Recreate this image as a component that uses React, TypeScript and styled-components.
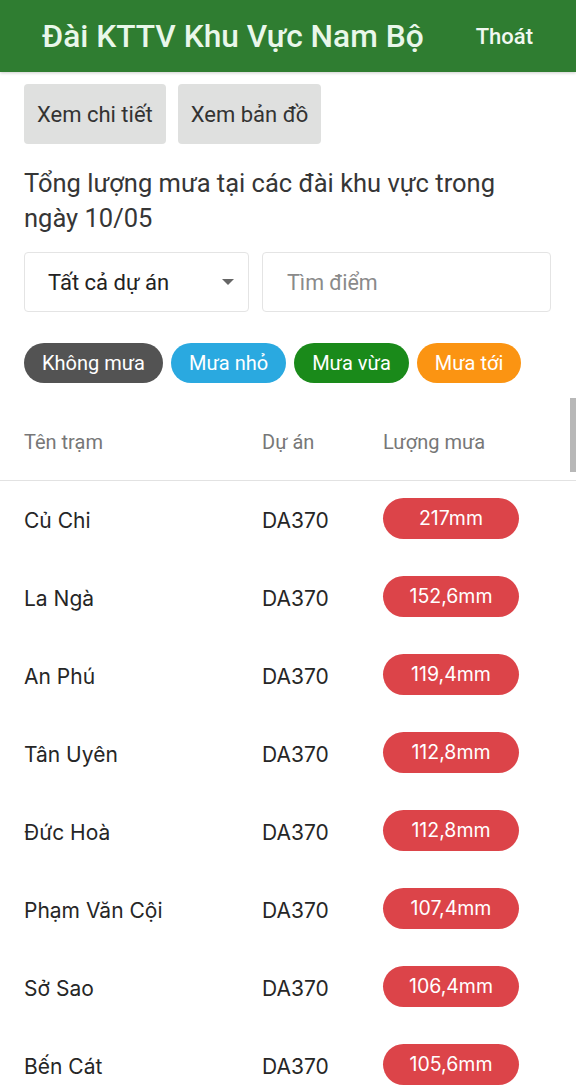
import React from 'react';
import styled, { createGlobalStyle } from 'styled-components';

const GlobalStyle = createGlobalStyle`
  html, body {
    margin: 0;
    padding: 0;
    background: #ffffff;
    font-family: Roboto, "Noto Sans", "Liberation Sans", sans-serif;
  }
  * { box-sizing: border-box; }
`;

type Station = { name: string; project: string; rain: string };

const stations: Station[] = [
  { name: 'Củ Chi', project: 'DA370', rain: '217mm' },
  { name: 'La Ngà', project: 'DA370', rain: '152,6mm' },
  { name: 'An Phú', project: 'DA370', rain: '119,4mm' },
  { name: 'Tân Uyên', project: 'DA370', rain: '112,8mm' },
  { name: 'Đức Hoà', project: 'DA370', rain: '112,8mm' },
  { name: 'Phạm Văn Cội', project: 'DA370', rain: '107,4mm' },
  { name: 'Sở Sao', project: 'DA370', rain: '106,4mm' },
  { name: 'Bến Cát', project: 'DA370', rain: '105,6mm' },
];

const legend = [
  { label: 'Không mưa', color: '#535353' },
  { label: 'Mưa nhỏ', color: '#2aa9e0' },
  { label: 'Mưa vừa', color: '#1a8a1a' },
  { label: 'Mưa tới', color: '#fb9412' },
];

const Page = styled.div`
  position: relative;
  width: 576px;
  height: 1085px;
  overflow: hidden;
`;

const TopBar = styled.header`
  height: 72px;
  background: #2f7d31;
  display: flex;
  align-items: center;
  padding: 0 43px 0 42px;
  justify-content: space-between;
  box-shadow: 0 1px 3px rgba(0, 0, 0, 0.2);
`;

const Title = styled.h1`
  margin: 0;
  font-size: 31.7px;
  font-weight: 500;
  color: #e9f7ea;
`;

const Logout = styled.span`
  font-size: 22px;
  font-weight: 500;
  color: #f1f8f1;
`;

const Content = styled.div`
  padding: 12px 25px 0 24px;
`;

const ButtonRow = styled.div`
  display: flex;
  gap: 12px;
`;

const GrayButton = styled.button`
  height: 60px;
  padding: 0 13px;
  border: none;
  border-radius: 4px;
  background: #dfe0df;
  color: #333;
  font-family: Roboto, "Liberation Sans", sans-serif;
  font-size: 22px;
`;

const Heading = styled.p`
  margin: 22px 0 0;
  font-size: 25.5px;
  line-height: 35px;
  color: #363636;
  padding-right: 30px;
`;

const FilterRow = styled.div`
  display: flex;
  gap: 13px;
  margin-top: 16px;
`;

const SelectBox = styled.div`
  width: 225px;
  height: 60px;
  border: 1px solid #e4e4e4;
  border-radius: 4px;
  display: flex;
  align-items: center;
  justify-content: space-between;
  padding: 0 14px 0 23px;
  font-size: 22px;
  color: #222;
`;

const Caret = styled.span`
  width: 0;
  height: 0;
  border-left: 6px solid transparent;
  border-right: 6px solid transparent;
  border-top: 6px solid #666;
`;

const SearchInput = styled.div`
  flex: 1;
  height: 60px;
  border: 1px solid #e4e4e4;
  border-radius: 4px;
  display: flex;
  align-items: center;
  padding: 0 24px;
  font-size: 21.5px;
  color: #8a8a8a;
`;

const LegendRow = styled.div`
  display: flex;
  gap: 8px;
  margin-top: 31px;
`;

const Chip = styled.span<{ $bg: string }>`
  height: 40px;
  padding: 0 18px;
  border-radius: 20px;
  background: ${(p) => p.$bg};
  color: #fff;
  font-size: 20px;
  display: inline-flex;
  align-items: center;
`;

const Table = styled.div`
  margin-top: 20px;
`;

const Row = styled.div<{ $head?: boolean }>`
  display: grid;
  grid-template-columns: 238px 121px 1fr;
  align-items: center;
  height: 78px;
  padding-left: 24px;
  border-bottom: ${(p) => (p.$head ? '1px solid #e2e2e2' : 'none')};
`;

const HeadCell = styled.span`
  font-size: 20px;
  color: #777;
`;

const Cell = styled.span`
  font-family: Inter, "Noto Sans", sans-serif;
  font-size: 21px;
  color: #262626;
`;

const RainBadge = styled.span`
  width: 136px;
  height: 41px;
  border-radius: 21px;
  background: #dc4449;
  color: #fff;
  font-family: Inter, "Noto Sans", sans-serif;
  font-size: 19.5px;
  display: flex;
  align-items: center;
  justify-content: center;
  margin-top: -4px;
`;

const ScrollThumb = styled.div`
  position: absolute;
  right: 0;
  top: 398px;
  width: 6px;
  height: 74px;
  background: #b8b8b8;
`;

export default function App() {
  return (
    <Page>
      <GlobalStyle />
      <TopBar>
        <Title>Đài KTTV Khu Vực Nam Bộ</Title>
        <Logout>Thoát</Logout>
      </TopBar>
      <Content>
        <ButtonRow>
          <GrayButton>Xem chi tiết</GrayButton>
          <GrayButton>Xem bản đồ</GrayButton>
        </ButtonRow>
        <Heading>Tổng lượng mưa tại các đài khu vực trong ngày 10/05</Heading>
        <FilterRow>
          <SelectBox>
            Tất cả dự án
            <Caret />
          </SelectBox>
          <SearchInput>Tìm điểm</SearchInput>
        </FilterRow>
        <LegendRow>
          {legend.map((l) => (
            <Chip key={l.label} $bg={l.color}>
              {l.label}
            </Chip>
          ))}
        </LegendRow>
      </Content>
      <Table>
        <Row $head>
          <HeadCell>Tên trạm</HeadCell>
          <HeadCell>Dự án</HeadCell>
          <HeadCell>Lượng mưa</HeadCell>
        </Row>
        {stations.map((s) => (
          <Row key={s.name}>
            <Cell>{s.name}</Cell>
            <Cell>{s.project}</Cell>
            <RainBadge>{s.rain}</RainBadge>
          </Row>
        ))}
      </Table>
      <ScrollThumb />
    </Page>
  );
}
